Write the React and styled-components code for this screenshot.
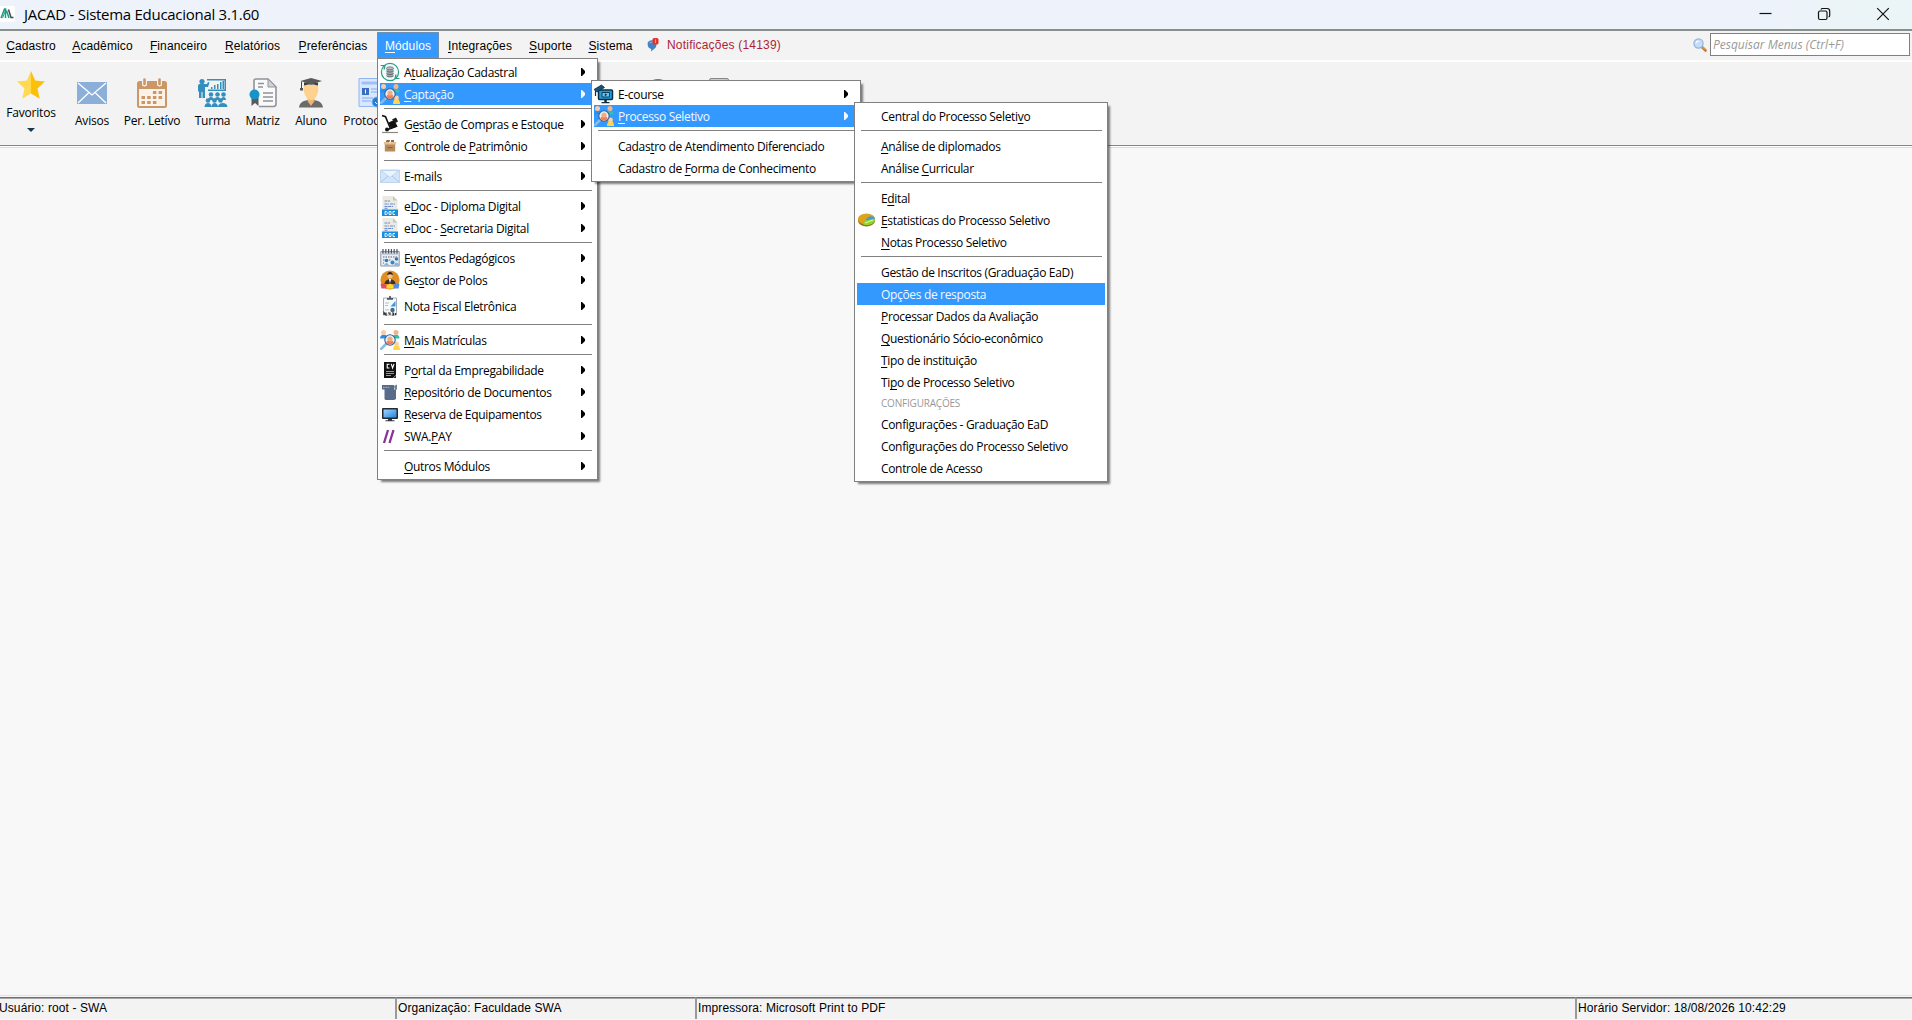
import React from "react";

// styled
import styled, { createGlobalStyle } from "styled-components";

const Colors = {
  text: "#000000",
  highlight: "#3399ff",
  panel: "#f3f3f3",
  desktop: "#f8f8f8",
  border: "#808080",
  danger: "#b01e35",
};

const ui = `"Open Sans", "Noto Sans", sans-serif`;
const arial = `"Liberation Sans", Arial, sans-serif`;

// menu data, "&" marks the mnemonic letter
const PROCESSO_SELETIVO = [
  { label: "Central do Processo Seleti&vo" },
  { separator: true },
  { label: "&Análise de diplomados" },
  { label: "Análise &Curricular" },
  { separator: true },
  { label: "E&dital" },
  { label: "&Estatisticas do Processo Seletivo", icon: "pie" },
  { label: "&Notas Processo Seletivo" },
  { separator: true },
  { label: "Gestão de Inscritos (Graduação EaD)" },
  { label: "Opções de resposta", active: true },
  { label: "&Processar Dados da Avaliação" },
  { label: "&Questionário Sócio-econômico" },
  { label: "&Tipo de instituição" },
  { label: "Ti&po de Processo Seletivo" },
  { title: "CONFIGURAÇÕES" },
  { label: "Configurações - Graduação EaD" },
  { label: "Configurações do Processo Seletivo" },
  { label: "Controle de Acesso" },
];

const CAPTACAO = [
  { label: "E-course", icon: "course", arrow: true },
  {
    label: "&Processo Seletivo",
    icon: "people",
    arrow: true,
    active: true,
    width: 254,
    items: PROCESSO_SELETIVO,
  },
  { separator: true },
  { label: "Cadas&tro de Atendimento Diferenciado" },
  { label: "Cadastro de &Forma de Conhecimento" },
];

const MODULOS = [
  { label: "A&tualização Cadastral", icon: "refresh", arrow: true },
  {
    label: "&Captação",
    icon: "people",
    arrow: true,
    active: true,
    width: 270,
    items: CAPTACAO,
  },
  { separator: true },
  { label: "G&estão de Compras e Estoque", icon: "cart", arrow: true },
  { label: "Controle de &Patrimônio", icon: "box", arrow: true },
  { separator: true },
  { label: "E-mails", icon: "mail", arrow: true },
  { separator: true },
  { label: "e&Doc - Diploma Digital", icon: "doc", arrow: true },
  { label: "eDoc - &Secretaria Digital", icon: "doc", arrow: true },
  { separator: true },
  { label: "E&ventos Pedagógicos", icon: "events", arrow: true },
  { label: "Ge&stor de Polos", icon: "manager", arrow: true },
  { label: "Nota &Fiscal Eletrônica", icon: "invoice", arrow: true, tall: true },
  { separator: true },
  { label: "&Mais Matrículas", icon: "people", arrow: true },
  { separator: true },
  { label: "P&ortal da Empregabilidade", icon: "cv", arrow: true },
  { label: "&Repositório de Documentos", icon: "repo", arrow: true },
  { label: "&Reserva de Equipamentos", icon: "monitor", arrow: true },
  { label: "SWA.&PAY", icon: "pay", arrow: true },
  { separator: true },
  { label: "&Outros Módulos", arrow: true },
];

const MENUBAR = [
  { label: "&Cadastro", width: 66 },
  { label: "&Acadêmico", width: 77 },
  { label: "&Financeiro", width: 75 },
  { label: "&Relatórios", width: 73 },
  { label: "&Preferências", width: 88 },
  { label: "&Módulos", width: 62, items: MODULOS },
  { label: "&Integrações", width: 82 },
  { label: "&Suporte", width: 59 },
  { label: "&Sistema", width: 61 },
];

const icons = {
  refresh: (
    <>
      <circle cx="10" cy="10" r="8.6" fill="#f4fbf9" stroke="#2a9d83" strokeWidth="1.2" />
      <path d="M.5 3.500h4.500l-1 4M19.500 16.500H15l1-4" fill="none" stroke="#2a9d83" strokeWidth="1.2" />
      <path d="M6.500 6.500v7c0 2 7 2 7 0v-7" fill="#a3abb1" />
      <ellipse cx="10" cy="6.3" rx="3.500" ry="1.5" fill="#b9c0c5" stroke="#59636b" strokeWidth=".7" />
      <path d="M6.500 9c1 1.400 6 1.400 7 0M6.500 11.500c1 1.400 6 1.400 7 0M6.500 14c1 1.300 6 1.300 7 0" fill="none" stroke="#4e5860" strokeWidth=".8" />
    </>
  ),
  people: (
    <>
      <path d="M0 8.500C0 3 7.500 3 7.500 8.500z" fill="#2b8fea" />
      <circle cx="3.500" cy="2.600" r="2.500" fill="#f9cba8" />
      <path d="M12.500 8.500c0-5.500 7-5.500 7 0z" fill="#35bfae" />
      <circle cx="16" cy="2.600" r="2.500" fill="#f2b48b" />
      <path d="M13 20c0-7 7-7 7 0z" fill="#ffd84a" />
      <circle cx="16.500" cy="14" r="2.400" fill="#fbd0a4" />
      <path d="M6.500 13.500L1.200 18.800" stroke="#8db9e6" strokeWidth="2.600" strokeLinecap="round" />
      <circle cx="10" cy="10" r="5.200" fill="#e8f3fc" stroke="#35608c" strokeWidth="1.100" />
      <path d="M6.300 12.500c.700-3 6.700-3 7.400 0-1.500 2.800-5.900 2.800-7.400 0z" fill="#f0805a" />
      <circle cx="10" cy="9" r="2.600" fill="#f6a97c" />
    </>
  ),
  cart: (
    <>
      <path d="M2 1.500l3.500 1.200 5 12" fill="none" stroke="#111" strokeWidth="1.600" />
      <circle cx="7" cy="15.500" r="2" fill="#111" />
      <path d="M8 15.500l9-3.400" stroke="#111" strokeWidth="1.500" />
      <path d="M8.500 8.500l5.500-2.500 3.700 6.500-6.700 2.300z" fill="#111" />
      <path d="M12 5.500l4-2 2 4-2.500 1.500z" fill="#1c1c1c" />
      <path d="M2 18.500h16" stroke="#888" strokeWidth="1.200" />
    </>
  ),
  box: (
    <>
      <path d="M4.800 8h10.400v7.500H4.800z" fill="#b98a5a" />
      <path d="M4.500 8.500L3.500 6h6L10 8l.500-2h6l-1 2.500z" fill="#e6bf90" />
      <path d="M6 5l1-1h3L9.500 6H6zM11 4h3v2h-3z" fill="#8b6a4c" />
      <path d="M7.500 11h5v1.200h-5z" fill="#8c6540" />
    </>
  ),
  mail: (
    <>
      <path d="M.5 4h19v12.500H.5z" fill="#d3e5f8" stroke="#bfd6ef" />
      <path d="M1 16l7-6M19 16l-7-6" stroke="#a9c8ea" fill="none" />
      <path d="M1 4.500l9 7 9-7z" fill="#eaf4fe" stroke="#b4cdec" strokeWidth=".8" />
    </>
  ),
  doc: (
    <>
      <path d="M2.500 0H13l4.500 4.500V14h-15z" fill="#e9ebe2" />
      <path d="M13 0l4.500 4.500H13z" fill="#c5c8bd" />
      <path d="M4.500 5H10M4.500 8H9M10 8h5M4.500 10.500H13M4.500 12.300h3" stroke="#7189cf" strokeWidth="1" strokeDasharray="3 .6" />
      <path d="M2 13.500h16V20H2z" fill="#1490df" />
      <path d="M5 15.500v3h1.500l.7-.7v-1.600l-.7-.7zM9 15.500h2v3H9zM15 15.500h-2v3h2" fill="none" stroke="#fff" strokeWidth=".9" />
    </>
  ),
  events: (
    <>
      <path d="M.8 3.500h18.400v14.500H.8z" fill="#e9edf2" stroke="#8b95a3" />
      <path d="M1 4h18v3H1z" fill="#c9d0da" />
      <path d="M3 1v4.500M5.800 1v4.500M8.600 1v4.500M11.400 1v4.500M14.200 1v4.500M17 1v4.500" stroke="#4d5561" strokeWidth="1.200" />
      <path d="M3 9h14M3 12h2M9 12h2M3 15h1" stroke="#8994a5" strokeWidth="1.500" strokeDasharray="1.500 1" />
      <circle cx="6.500" cy="12.500" r="1.800" fill="#2f78b8" />
      <circle cx="12.500" cy="14.500" r="2" fill="#3b85c4" />
      <circle cx="16.500" cy="11" r="1.800" fill="#2f78b8" />
      <path d="M4 17.500c1-3.500 4-3.500 5 0M14 17.500c1-4 4-4 5 0" fill="#85b4dd" />
    </>
  ),
  manager: (
    <>
      <circle cx="10" cy="10" r="9.600" fill="#dd8f24" />
      <path d="M4.500 14c0-6.500 11-6.500 11 0z" fill="#40302a" />
      <circle cx="10" cy="5.800" r="2.600" fill="#f0c39a" />
      <path d="M7.200 5.300c0-4.300 5.600-4.300 5.600 0-2-1.300-3.600-1.300-5.600 0z" fill="#2f2420" />
      <path d="M8.800 9h2.400L10 13z" fill="#fff" />
      <path d="M.5 14l3-.500 3.500 2v3H1.500z" fill="#e74b5d" />
      <path d="M13 15l3.500-1.500 3 .500-1 4.500H13z" fill="#4a8ee8" />
      <path d="M6.500 15.500L10 13.500l3.500 2V18.500h-7z" fill="#ffd733" />
    </>
  ),
  invoice: (
    <>
      <path d="M3.500 2h13v17h-13z" fill="#f7fafc" stroke="#a6acb3" />
      <path d="M7 2.800h6M10 0v2" stroke="#50565d" strokeWidth="1.700" />
      <path d="M5 7h4M5 9.500h3" stroke="#b9c0c6" />
      <path d="M10.500 10.500L15.500 5v5.500z" fill="#369be8" />
      <circle cx="12.500" cy="14" r="2.200" fill="#4a6b86" />
      <path d="M5 13h4v1.500H5z" fill="#cbd4db" />
      <path d="M4 19v-2.500l2 2.500v-2.500M8 17h2v2M12 17h1.500v2H12M15.500 17v2" fill="none" stroke="#333" strokeWidth="1.200" />
    </>
  ),
  cv: (
    <>
      <path d="M4 2h12v13l-3 3H4z" fill="#111" />
      <path d="M9.500 4.200H7.200v3.800h2.300M11.200 3.800l1.400 4.200L14 3.800" fill="none" stroke="#fff" strokeWidth="1.100" />
      <path d="M6 11.500h8M6 13.500h8M6 15.500h5" stroke="#bbb" strokeWidth=".8" />
      <path d="M16 15.500V18h-2.500z" fill="#222" />
    </>
  ),
  repo: (
    <>
      <path d="M2 3h12v4.500H2zM4.500 7.500H16V17l-2 1H5.500l-1-1z" fill="#586b89" />
      <path d="M14 4l3-1.500v5l-2 .500z" fill="#6d809d" />
      <path d="M3 5.300h7" stroke="#aebbd0" strokeWidth="1" strokeDasharray="1.500 .8" />
    </>
  ),
  monitor: (
    <>
      <defs>
        <linearGradient id="screen" x1="0" y1="0" x2="1" y2="1">
          <stop offset="0" stopColor="#9fd4ff" />
          <stop offset="1" stopColor="#2583dd" />
        </linearGradient>
      </defs>
      <rect x="2" y="4" width="16" height="11" rx="1" fill="#222a31" />
      <path d="M3.500 5.500h13v8h-13z" fill="url(#screen)" />
      <path d="M8 15h4v1.500H8zM5.500 16.300h9v1h-9z" fill="#30373e" />
    </>
  ),
  pay: (
    <path d="M4 17L8 4M9.500 17l4-13" stroke="#89339a" strokeWidth="2.300" fill="none" />
  ),
  course: (
    <>
      <rect x="4.500" y="6" width="14" height="9.500" rx="1" fill="#1f9fe0" stroke="#0c2f46" strokeWidth="1.500" />
      <path d="M8 8.500h7.500v4.500H8z" fill="#5fcaf7" stroke="#0c2f46" strokeWidth=".9" />
      <path d="M10.800 9.300v3l2.400-1.500z" fill="#0c2f46" />
      <path d="M10.300 15.500h2.500V18h-2.500zM7.500 18h8v1.200h-8z" fill="#0c2f46" />
      <path d="M0 5.500L7.500 1l3 2.500L3 8z" fill="#16527a" stroke="#0c2f46" strokeWidth=".8" />
      <path d="M1.500 7v5" stroke="#0c2f46" strokeWidth="1.200" />
    </>
  ),
  pie: (
    <>
      <ellipse cx="9.500" cy="10.800" rx="8.500" ry="5.600" fill="#93761c" />
      <ellipse cx="9.500" cy="9" rx="8.500" ry="5.600" fill="#dda31d" />
      <path d="M6.500 14.500C8 8 13 7 18 8.500 18.500 13 12 16.500 6.500 14.500z" fill="#8ed62e" />
      <path d="M8.500 10.500C10 6.500 14 5.500 17 7l1 1.700z" fill="#3fa0d0" />
      <path d="M8 13l8-3" stroke="#d6f7a0" strokeWidth="1.200" />
    </>
  ),
};

function Mnemonic({ children }) {
  const at = children.indexOf("&");
  if (at < 0) return <span>{children}</span>;
  return (
    <span>
      {children.slice(0, at)}
      <Key>{children[at + 1]}</Key>
      {children.slice(at + 2)}
    </span>
  );
}

function Menu({ items }) {
  return items.map((item, i) => {
    if (item.separator) return <Separator key={i} />;
    if (item.title) return <MenuTitle key={i}>{item.title}</MenuTitle>;
    return (
      <MenuRow key={i} $active={item.active} $tall={item.tall}>
        <MenuIcon viewBox="0 0 20 20">{icons[item.icon]}</MenuIcon>
        <MenuLabel>
          <Mnemonic>{item.label}</Mnemonic>
        </MenuLabel>
        {item.arrow && (
          <Arrow viewBox="0 0 4 8">
            <path d="M0 0h1l3 3v2L1 8H0z" fill="currentColor" />
          </Arrow>
        )}
        {item.items && (
          <SubMenu $width={item.width}>
            <Menu items={item.items} />
          </SubMenu>
        )}
      </MenuRow>
    );
  });
}

function TitleBar() {
  return (
    <StyledTitleBar>
      <Logo viewBox="0 0 16 16">
        <rect x="-3" width="18" height="16" rx="2" fill="#fff" />
        <path d="M1 12l3.500-9h1V12M6.500 4.500L9 12" fill="none" stroke="#1c9d84" strokeWidth="1.500" />
        <path d="M2.500 12L6 3.500" stroke="#1c9d84" strokeWidth="1" />
        <path d="M8.500 3.500L11 11.500h2.500" fill="none" stroke="#444d50" strokeWidth="1.500" />
      </Logo>
      <Title>JACAD - Sistema Educacional 3.1.60</Title>
      <WindowButtons>
        <WindowIcon viewBox="0 0 14 14">
          <path d="M1.500 6.500h12" />
        </WindowIcon>
        <WindowIcon viewBox="0 0 14 14">
          <rect x="1.500" y="4" width="8.500" height="8.500" rx="1.500" />
          <path d="M4 2.500c.3-.7.800-1 1.500-1H10c1.700 0 2.700 1 2.700 2.700V8.500c0 .700-.300 1.200-1 1.500" />
        </WindowIcon>
        <WindowIcon viewBox="0 0 14 14">
          <path d="M1.200 1.200l11.600 11.600M12.800 1.200L1.200 12.800" />
        </WindowIcon>
      </WindowButtons>
    </StyledTitleBar>
  );
}

function MenuBar() {
  return (
    <StyledMenuBar>
      {MENUBAR.map((item) => (
        <MenuBarItem key={item.label} $width={item.width} $open={!!item.items}>
          <Mnemonic>{item.label}</Mnemonic>
          {item.items && (
            <DropDown>
              <Menu items={item.items} />
            </DropDown>
          )}
        </MenuBarItem>
      ))}
      <Notifications>
        <svg width="13" height="14" viewBox="0 0 13 14">
          <path d="M1 4c3-3 7-2 8 1s0 5-2 6L4 13.500 4.200 11C1 10 0 7 1 4z" fill="#4283c4" />
          <path d="M2.500 5c2-1.500 4-1 5 1" stroke="#8fbce6" fill="none" />
          <rect x="5.500" y="0" width="6" height="6.500" rx="1.500" fill="#e23333" />
          <path d="M8.500 1.500v3.500" stroke="#f59a9a" />
        </svg>
        Notificações (14139)
      </Notifications>
      <Search>
        <svg width="14" height="14" viewBox="0 0 14 14">
          <path d="M8.500 8.500l4 4" stroke="#c07a35" strokeWidth="2.600" strokeLinecap="round" />
          <path d="M9.500 9l2.500 2.500" stroke="#efb373" strokeWidth=".9" />
          <circle cx="5.500" cy="5.500" r="4.600" fill="#c3defa" stroke="#92b4de" strokeWidth="1.200" />
          <path d="M3 5c.3-1.400 1.500-2 3-2" stroke="#fff" fill="none" strokeWidth="1.200" />
        </svg>
        <SearchInput placeholder="Pesquisar Menus (Ctrl+F)" />
      </Search>
    </StyledMenuBar>
  );
}

function ToolBar() {
  return (
    <StyledToolBar>
      <Favorites>
        <svg width="28" height="28" viewBox="0 0 28 28">
          <path d="M14 0l4.200 9.500L28 10.500l-7.500 7 2.200 10.300L14 22.500z" fill="#fcbf0a" />
          <path d="M14 0L9.800 9.500 0 10.500l7.500 7L5.300 27.800 14 22.500z" fill="#ffd951" />
        </svg>
        Favoritos
        <DropMark viewBox="0 0 8 4">
          <path d="M0 0h8L4 4z" fill="#17384d" />
        </DropMark>
      </Favorites>
      <ToolButton $width={34}>
        <svg width="30" height="30" viewBox="0 0 30 30">
          <path d="M0 4h30v22H0z" fill="#8bafd9" />
          <path d="M1 5l14 12L29 5M1 25l10.500-10M29 25L18.500 15" fill="none" stroke="#fff" strokeWidth="1.300" />
        </svg>
        Avisos
      </ToolButton>
      <ToolButton $width={54}>
        <svg width="30" height="30" viewBox="0 0 30 30">
          <rect x="0" y="3" width="30" height="27" rx="2.500" fill="#cb9767" />
          <path d="M2 11h26v17H2z" fill="#fbf3ea" />
          <path d="M7.500 1v5M22.500 1v5" stroke="#f3f3f3" strokeWidth="5" strokeLinecap="round" />
          <path d="M7.500 1.500v4.500M22.500 1.500v4.500" stroke="#cb9767" strokeWidth="2.600" strokeLinecap="round" />
          <path d="M15.900 14.500h10.300M4.500 19.500h21.500M4.500 24.500h17" stroke="#cb9767" strokeWidth="3.200" strokeDasharray="3.500 2.200" />
        </svg>
        Per. Letívo
      </ToolButton>
      <ToolButton $width={35}>
        <svg width="30" height="30" viewBox="0 0 30 30">
          <g fill="#358fbe">
            <circle cx="4" cy="3.500" r="2.600" />
            <path d="M0 8c0-1.500 1-2 2-2h7l1-2 1.500.5L10 9H7v11H4.500v-6H3.500v6H1V14L0 13z" />
            <path d="M9 1h19v12H10v-1.500h16.500v-9H9z" />
            <path d="M13 9h1.500v2H13zM16 7h1.500v4H16zM19 6h1.500v5H19zM22 4h1.500v7H22zM24.500 3H26v8h-1.500z" />
            <circle cx="13" cy="16.500" r="2.300" />
            <circle cx="19.500" cy="16.500" r="2.300" />
            <circle cx="25.500" cy="16.500" r="2.300" />
            <path d="M10 22c0-4 6-4 6 0zM16.500 22c0-4 6-4 6 0zM23 22c0-4 5-4 5 0z" />
            <circle cx="10" cy="22.500" r="2.300" />
            <circle cx="16.500" cy="22.500" r="2.300" />
            <circle cx="22.500" cy="22.500" r="2.300" />
            <path d="M6.500 29c0-5.500 7-5.500 7 0zM13.500 29c0-5.500 6.500-5.500 6.500 0zM20 29c0-5.500 9.500-5.500 9.500 0z" />
          </g>
        </svg>
        Turma
      </ToolButton>
      <ToolButton $width={33}>
        <svg width="28" height="30" viewBox="0 0 28 30">
          <path d="M5 12V3c0-1.300.7-2 2-2h12l8 8v17c0 1.500-1 2.500-2.500 2.500H10" fill="#fafafa" stroke="#8f9399" strokeWidth="1.600" />
          <path d="M19 1v8h8z" fill="#d0d2d5" stroke="#8f9399" />
          <path d="M9 5.500h6M9 9h5M14 15h10M14 19h10M14 23h10" stroke="#8f9399" strokeWidth="1.500" />
          <path d="M2.500 19h7v9l-3.500-3-3.500 3z" fill="#555a60" />
          <circle cx="5.500" cy="16.500" r="5" fill="#1795c9" />
        </svg>
        Matriz
      </ToolButton>
      <ToolButton $width={32}>
        <svg width="26" height="30" viewBox="0 0 26 30">
          <path d="M1 29.500C1.500 24 6 23 9.500 22h7C20 23 24.500 24 25 29.500z" fill="#6b6b6b" />
          <path d="M9.500 20h7v3L13 28l-3.500-5z" fill="#eeb574" />
          <path d="M6 7h14c1.500 7-2 15-7 15S4.500 14 6 7z" fill="#ffd18f" />
          <path d="M6 4.500h14v3c-3-1.500-11-1.500-14 0z" fill="#3e3e3e" />
          <path d="M2.500 3L13 0l11 3-11 3.500z" fill="#595959" />
          <path d="M3.500 3.500v7" stroke="#444" />
          <path d="M2 10h3v2.500H2z" fill="#555" />
        </svg>
        Aluno
      </ToolButton>
      <ToolButton $width={53}>
        <svg width="24" height="30" viewBox="0 0 24 30">
          <path d="M1 .5h21v28H1z" fill="#d7e7ff" stroke="#8fb5f2" />
          <path d="M3.500 3.500h16v3h-16z" fill="#9fc0f5" />
          <path d="M4 10h7v7H4z" fill="#3a6ec0" />
          <path d="M13 11h7M13 14h7M4 20h11M4 23h9" stroke="#9fc0f5" strokeWidth="1.300" />
          <path d="M7.500 11.500v4" stroke="#fff" />
          <circle cx="19" cy="24" r="5" fill="#2979cf" stroke="#79baf5" />
          <path d="M17 24l2 2 4-4" stroke="#fff" fill="none" />
        </svg>
        Protocolo
      </ToolButton>
      <ToolButton $width={40} $gap={226}>
        <svg width="30" height="30" viewBox="0 0 30 30">
          <circle cx="15" cy="14.500" r="13.500" fill="#3f8f7d" />
        </svg>
      </ToolButton>
      <ToolButton $width={40} $gap={5}>
        <svg width="20" height="30" viewBox="0 0 20 30">
          <rect x=".5" y=".5" width="19" height="28" rx="1.500" fill="#c9cccf" stroke="#85888c" />
        </svg>
      </ToolButton>
    </StyledToolBar>
  );
}

export default function App() {
  return (
    <Window>
      <GlobalStyle />
      <TitleBar />
      <MenuBar />
      <ToolBar />
      <Desktop />
      <StatusBar>
        <StatusCell $width={395} $first>
          Usuário: root - SWA
        </StatusCell>
        <StatusCell $width={300}>Organização: Faculdade SWA</StatusCell>
        <StatusCell $width={880}>Impressora: Microsoft Print to PDF</StatusCell>
        <StatusCell>Horário Servidor: 18/08/2026 10:42:29</StatusCell>
      </StatusBar>
    </Window>
  );
}

const GlobalStyle = createGlobalStyle`
  * {
    box-sizing: border-box;
  }
  body {
    margin: 0;
    overflow: hidden;
    color: ${Colors.text};
  }
  svg {
    display: block;
    flex-shrink: 0;
  }
`;
const Window = styled.div`
  width: 1912px;
  height: 1020px;
  display: flex;
  flex-direction: column;
  background: ${Colors.desktop};
`;

// title bar
const StyledTitleBar = styled.header`
  height: 31px;
  flex-shrink: 0;
  display: flex;
  align-items: center;
  background: linear-gradient(90deg, #eef3fb 92%, #ebf4f6 97%);
  border-bottom: 2px solid #8a8f8e;
`;
const Logo = styled.svg`
  width: 16px;
  height: 16px;
  margin-bottom: 1px;
`;
const Title = styled.h1`
  margin: 0 0 2px 8px;
  font: 400 15px/20px ${ui};
  letter-spacing: -0.28px;
`;
const WindowButtons = styled.div`
  margin: 0 22px 1px auto;
  display: flex;
  gap: 45px;
`;
const WindowIcon = styled.svg`
  width: 14px;
  height: 14px;
  fill: none;
  stroke: #111;
  stroke-width: 1.200;
`;

// menu bar
const StyledMenuBar = styled.nav`
  height: 31px;
  flex-shrink: 0;
  display: flex;
  padding: 1px 2px 0 0;
  margin-left: -2px;
  background: ${Colors.panel};
  border-bottom: 2px solid #fff;
`;
const Key = styled.span`
  text-decoration: underline;
  text-decoration-thickness: 1px;
  text-underline-offset: 2px;
  text-decoration-skip-ink: none;
`;
const MenuBarItem = styled.div`
  position: relative;
  width: ${(props) => props.$width}px;
  height: 26px;
  font: 12px/28px ${arial};
  letter-spacing: 0.12px;
  text-align: center;
  white-space: nowrap;
  color: ${(props) => (props.$open ? "#fff" : Colors.text)};
  background: ${(props) => (props.$open ? Colors.highlight : "transparent")};
  box-shadow: ${(props) => (props.$open ? `inset 0 0 0 1px #6f8fb4` : "none")};
`;
const Panel = styled.div`
  position: absolute;
  z-index: 2;
  width: ${(props) => props.$width}px;
  padding: 2px;
  background: #fff;
  border: 1px solid ${Colors.border};
  box-shadow: 3px 3px 2px -1px rgba(0, 0, 0, 0.5);
  color: ${Colors.text};
  text-align: left;
`;
const DropDown = styled(Panel).attrs({ $width: 221 })`
  top: 100%;
  left: 0;
`;
const SubMenu = styled(Panel)`
  top: -3px;
  left: calc(100% - 4px);
`;
const MenuRow = styled.div`
  position: relative;
  display: flex;
  align-items: center;
  height: ${(props) => (props.$tall ? 30 : 22)}px;
  padding-right: 10px;
  font: 12px/22px ${ui};
  letter-spacing: -0.33px;
  color: ${(props) => (props.$active ? "#f4f8ff" : Colors.text)};
  background: ${(props) => (props.$active ? Colors.highlight : "transparent")};
`;
const MenuIcon = styled.svg`
  width: 20px;
  height: 20px;
  margin-right: 4px;
`;
const MenuLabel = styled.span`
  padding-top: 2px;
`;
const Arrow = styled.svg`
  width: 4px;
  height: 8px;
  margin-left: auto;
`;
const Separator = styled.div`
  height: 8px;
  padding: 3px 3px 0 4px;

  &::before {
    content: "";
    display: block;
    height: 1px;
    background: ${Colors.border};
  }
`;
const MenuTitle = styled.div`
  height: 20px;
  padding-left: 24px;
  font: 10px/20px ${ui};
  letter-spacing: -0.2px;
  color: #999;
`;
const Notifications = styled.div`
  display: flex;
  align-items: center;
  gap: 7px;
  height: 26px;
  margin-left: 6px;
  font: 12px/26px ${arial};
  letter-spacing: 0.2px;
  color: ${Colors.danger};
`;
const Search = styled.label`
  display: flex;
  align-items: center;
  gap: 3px;
  height: 25px;
  margin-left: auto;
`;
const SearchInput = styled.input`
  width: 200px;
  height: 23px;
  padding: 0 2px 1px;
  border: 1px solid ${Colors.border};
  background: #fff;
  font: italic 12px ${ui};

  &::placeholder {
    color: #999;
    opacity: 1;
  }
`;

// tool bar
const StyledToolBar = styled.div`
  height: 86px;
  flex-shrink: 0;
  display: flex;
  align-items: flex-start;
  padding-left: 7px;
  background: ${Colors.panel};
  border-bottom: 1px solid #dcdcdc;
  box-shadow: inset 0 -1px 0 #fff, inset 0 -2px 0 #858585;
  font: 12px/16px ${ui};
  letter-spacing: -0.2px;
  white-space: nowrap;
`;
const Favorites = styled.div`
  width: 48px;
  margin: 9px 20px 0 0;
  display: flex;
  flex-direction: column;
  align-items: center;
  gap: 6px;
`;
const DropMark = styled.svg`
  width: 8px;
  height: 4px;
  margin-top: 1px;
`;
const ToolButton = styled.div`
  width: ${(props) => props.$width}px;
  margin: 16px 16px 0 ${(props) => props.$gap || 0}px;
  flex-shrink: 0;
  display: flex;
  flex-direction: column;
  align-items: center;
  gap: 5px;
`;

const Desktop = styled.main`
  flex: 1;
  background: ${Colors.desktop};
  border-bottom: 1px solid #e2e2e2;
`;

// status bar
const StatusBar = styled.footer`
  height: 24px;
  flex-shrink: 0;
  display: flex;
  padding: 1px 0;
`;
const StatusCell = styled.div`
  ${(props) => (props.$width ? `width: ${props.$width}px;` : "flex: 1;")}
  height: 22px;
  padding-left: ${(props) => (props.$first ? 0 : 1)}px;
  text-indent: ${(props) => (props.$first ? -1 : 0)}px;
  background: ${Colors.panel};
  border-top: 1px solid #707070;
  border-left: ${(props) => (props.$first ? "none" : "2px solid #9a9a9a")};
  box-shadow: inset 0 1px 0 #a8a8a8;
  font: 12px/21px ${arial};
  letter-spacing: 0.1px;
  white-space: nowrap;
`;
